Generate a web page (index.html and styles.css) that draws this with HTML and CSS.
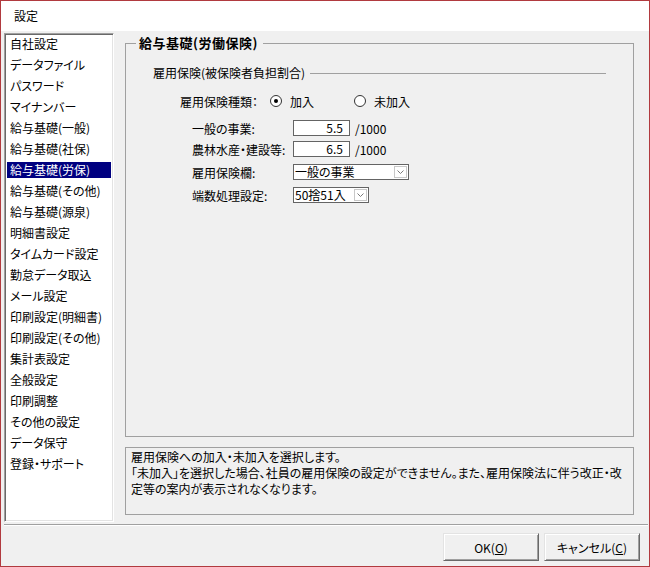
FILE: index.html
```html
<!DOCTYPE html>
<html lang="ja">
<head>
<meta charset="utf-8">
<title>設定</title>
<link rel="stylesheet" href="styles.css">
</head>
<body>
<div class="window">
  <div class="titlebar">設定</div>
  <div class="body">
    <div class="main">
      <div class="list">
        <div class="item">自社設定</div>
        <div class="item">データファイル</div>
        <div class="item">パスワード</div>
        <div class="item">マイナンバー</div>
        <div class="item">給与基礎(一般)</div>
        <div class="item">給与基礎(社保)</div>
        <div class="item selected">給与基礎(労保)</div>
        <div class="item">給与基礎(その他)</div>
        <div class="item">給与基礎(源泉)</div>
        <div class="item">明細書設定</div>
        <div class="item">タイムカード設定</div>
        <div class="item">勤怠データ取込</div>
        <div class="item">メール設定</div>
        <div class="item">印刷設定(明細書)</div>
        <div class="item">印刷設定(その他)</div>
        <div class="item">集計表設定</div>
        <div class="item">全般設定</div>
        <div class="item">印刷調整</div>
        <div class="item">その他の設定</div>
        <div class="item">データ保守</div>
        <div class="item">登録・サポート</div>
      </div>
      <div class="content">
        <fieldset class="group">
          <legend class="group-title">給与基礎(労働保険)</legend>
          <div class="sub-head">
            <span>雇用保険(被保険者負担割合)</span>
            <span class="sub-line"></span>
          </div>
          <div class="radio-row">
            <span class="radio-label">雇用保険種類：</span>
            <span class="radio-opt first"><span class="radio on"></span><span>加入</span></span>
            <span class="radio-opt"><span class="radio"></span><span>未加入</span></span>
          </div>
          <div class="field-row first-row">
            <span class="field-label">一般の事業:</span>
            <span class="num-input">5.5</span>
            <span class="unit">/1000</span>
          </div>
          <div class="field-row num-row">
            <span class="field-label">農林水産・建設等:</span>
            <span class="num-input">6.5</span>
            <span class="unit">/1000</span>
          </div>
          <div class="field-row sel-row">
            <span class="field-label">雇用保険欄:</span>
            <span class="select wide">
              <span class="select-text">一般の事業</span>
              <span class="select-btn"><svg width="7" height="4" viewBox="0 0 7 4"><polyline points="0.5,0.5 3.5,3.5 6.5,0.5" fill="none" stroke="#7a7a7a" stroke-width="1"/></svg></span>
            </span>
          </div>
          <div class="field-row sel-row">
            <span class="field-label">端数処理設定:</span>
            <span class="select narrow">
              <span class="select-text">50捨51入</span>
              <span class="select-btn"><svg width="7" height="4" viewBox="0 0 7 4"><polyline points="0.5,0.5 3.5,3.5 6.5,0.5" fill="none" stroke="#7a7a7a" stroke-width="1"/></svg></span>
            </span>
          </div>
        </fieldset>
        <div class="desc">雇用保険への加入・未加入を選択します。<br>「未加入」を選択した場合、社員の雇用保険の設定ができません。また、雇用保険法に伴う改正・改<br>定等の案内が表示されなくなります。</div>
      </div>
    </div>
    <div class="separator"></div>
    <div class="footer">
      <button class="btn">OK(<u>O</u>)</button>
      <button class="btn">キャンセル(<u>C</u>)</button>
    </div>
  </div>
</div>
</body>
</html>
```

FILE: styles.css
```css
* { box-sizing: border-box; }
html, body { margin: 0; padding: 0; }
body {
  font-family: "Noto Sans CJK JP", sans-serif;
  font-size: 12px;
  color: #000;
  font-feature-settings: "palt";
  background: #fff;
}
.window {
  width: 650px;
  height: 567px;
  border: 1px solid #b13a3f;
  display: flex;
  flex-direction: column;
  background: #f0f0f0;
}
.titlebar {
  flex: none;
  height: 30px;
  line-height: 30px;
  padding-left: 13px;
  background: #fff;
}
.body {
  flex: 1;
  display: flex;
  flex-direction: column;
}
.main {
  display: flex;
  align-items: flex-start;
  padding: 2px 0 0 3px;
  height: 491px;
}
.list {
  flex: none;
  width: 110px;
  height: 489px;
  background: #fff;
  border: 1px solid;
  border-color: #a0a0a0 #ffffff #ffffff #a0a0a0;
  box-shadow: inset 1px 1px #696969, inset -1px -1px #e3e3e3;
  padding: 2px 2px 0 2px;
}
.item {
  height: 16px;
  line-height: 16px;
  margin-bottom: 5px;
  padding-left: 3px;
  white-space: nowrap;
}
.item.selected {
  background: #000080;
  color: #fff;
}
.content {
  flex: none;
  margin-left: 11px;
  width: 509px;
  display: flex;
  flex-direction: column;
}
.group {
  margin: 2px 0 0 0;
  padding: 0;
  min-width: 0;
  height: 402px;
  border: 1px solid #a0a0a0;
}
.group-title {
  margin-left: 10px;
  padding: 0 5px 0 3px;
  font-weight: bold;
  font-size: 13px;
  line-height: 16px;
  letter-spacing: 0.5px;
}
.sub-head {
  display: flex;
  align-items: center;
  height: 16px;
  line-height: 16px;
  margin: 14px 27px 0 27px;
}
.sub-line {
  flex: 1;
  border-top: 1px solid #a0a0a0;
  margin-left: 5px;
}
.radio-row {
  display: flex;
  align-items: center;
  height: 16px;
  margin: 12px 0 0 54px;
}
.radio-label {
  width: 90px;
}
.radio-opt {
  display: flex;
  align-items: center;
  gap: 8px;
}
.radio-opt.first {
  width: 84px;
}
.radio {
  width: 12px;
  height: 12px;
  border-radius: 50%;
  border: 1px solid #333;
  background: #fff;
  display: flex;
  align-items: center;
  justify-content: center;
}
.radio.on::after {
  content: "";
  width: 4px;
  height: 4px;
  border-radius: 50%;
  background: #000;
}
.field-row {
  display: flex;
  align-items: center;
  height: 16px;
  margin-left: 66px;
}
.first-row { margin-top: 11px; }
.num-row { margin-top: 5px; }
.sel-row { margin-top: 7px; }
.field-label {
  width: 101px;
  white-space: nowrap;
}
.num-input {
  width: 57px;
  height: 16px;
  border: 1px solid #646464;
  background: #fff;
  text-align: right;
  padding-right: 6px;
  line-height: 14px;
}
.unit {
  margin-left: 5px;
}
.select {
  height: 16px;
  border: 1px solid #646464;
  background: #fff;
  display: flex;
  align-items: center;
  padding-left: 1px;
  line-height: 14px;
}
.select.wide { width: 116px; }
.select.narrow { width: 76px; }
.select-text {
  flex: 1;
  white-space: nowrap;
}
.select-btn {
  width: 13px;
  height: 12px;
  border: 1px solid #c8c8c8;
  margin-right: 1px;
  display: flex;
  align-items: center;
  justify-content: center;
  background: #fff;
}
.select-btn svg { display: block; }
.desc {
  margin-top: 10px;
  height: 68px;
  border: 1px solid #a0a0a0;
  padding: 1px 5px;
  line-height: 16px;
  white-space: nowrap;
  overflow: hidden;
}
.separator {
  margin: 2px 1px 0 3px;
  border-top: 1px solid #a0a0a0;
  border-bottom: 1px solid #ffffff;
}
.footer {
  display: flex;
  justify-content: flex-end;
  gap: 5px;
  padding: 7px 9px 0 0;
}
.btn {
  width: 96px;
  height: 28px;
  padding: 0;
  font-family: inherit;
  font-size: 12px;
  font-feature-settings: "palt";
  color: #000;
  background: #f0f0f0;
  border: 1px solid;
  border-color: #e3e3e3 #696969 #696969 #e3e3e3;
  box-shadow: inset 1px 1px #ffffff, inset -1px -1px #a0a0a0;
}
```
